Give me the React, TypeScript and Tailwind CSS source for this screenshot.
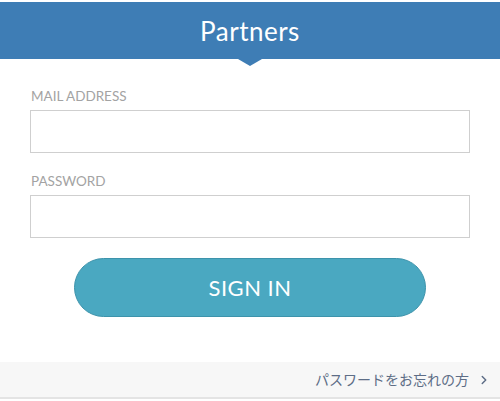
import { ChevronRight } from "lucide-react";

export default function App() {
    return (
        <div className="w-[500px] h-[401px] bg-white pt-[2px] font-['Lato','Open_Sans',sans-serif]">
            {/* Header */}
            <div className="relative h-[57px] bg-[#3e7db5] flex items-center justify-center">
                <h1 className="text-white text-[26px] tracking-[0.5px] leading-none">Partners</h1>
                <div className="absolute left-1/2 -translate-x-1/2 top-full w-0 h-0 border-l-[12px] border-r-[12px] border-t-[7px] border-l-transparent border-r-transparent border-t-[#3e7db5]" />
            </div>

            {/* Form */}
            <form className="px-[30px] pt-[29px]">
                <label className="block text-[13.5px] leading-[16px] text-[#a3a3a3] pl-[1px]">MAIL ADDRESS</label>
                <input
                    type="email"
                    className="block mt-[6px] w-full h-[43px] border border-[#cfcfcf] bg-white outline-none"
                />
                <label className="block mt-[20px] text-[13.5px] leading-[16px] text-[#a3a3a3] pl-[1px]">PASSWORD</label>
                <input
                    type="password"
                    className="block mt-[6px] w-full h-[43px] border border-[#cfcfcf] bg-white outline-none"
                />
                <div className="flex justify-center mt-[20px]">
                    <button
                        type="button"
                        className="w-[352px] h-[59px] rounded-full bg-[#4aa8c1] border border-[#3d93ab] text-white text-[22px] tracking-[0.5px]"
                    >
                        SIGN IN
                    </button>
                </div>
            </form>

            {/* Footer link */}
            <div className="mt-[45px] h-[37px] bg-[#f7f7f7] border-b-2 border-[#e4e4e4] flex items-center justify-end pr-[9px]">
                <a className="flex items-center gap-[8px] text-[14px] text-[#5d6d86] font-['Noto_Sans_CJK_JP',sans-serif]">
                    パスワードをお忘れの方
                    <ChevronRight size={14} strokeWidth={2.5} />
                </a>
            </div>
        </div>
    );
}
